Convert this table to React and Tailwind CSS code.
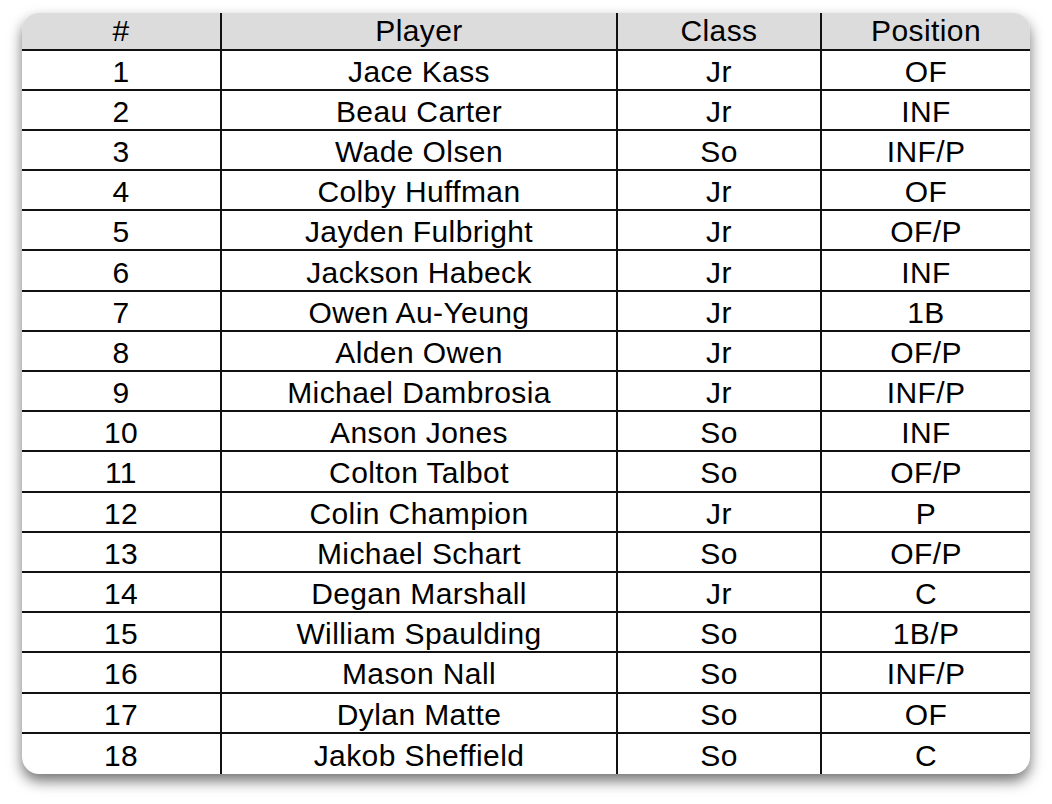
const players = [
  [1, "Jace Kass", "Jr", "OF"],
  [2, "Beau Carter", "Jr", "INF"],
  [3, "Wade Olsen", "So", "INF/P"],
  [4, "Colby Huffman", "Jr", "OF"],
  [5, "Jayden Fulbright", "Jr", "OF/P"],
  [6, "Jackson Habeck", "Jr", "INF"],
  [7, "Owen Au-Yeung", "Jr", "1B"],
  [8, "Alden Owen", "Jr", "OF/P"],
  [9, "Michael Dambrosia", "Jr", "INF/P"],
  [10, "Anson Jones", "So", "INF"],
  [11, "Colton Talbot", "So", "OF/P"],
  [12, "Colin Champion", "Jr", "P"],
  [13, "Michael Schart", "So", "OF/P"],
  [14, "Degan Marshall", "Jr", "C"],
  [15, "William Spaulding", "So", "1B/P"],
  [16, "Mason Nall", "So", "INF/P"],
  [17, "Dylan Matte", "So", "OF"],
  [18, "Jakob Sheffield", "So", "C"],
];

const cols = "grid grid-cols-[200px_396px_204px_208px]";

const Cell = ({ children, last, className = "" }) => (
  <div
    className={`flex items-center justify-center border-[#111] leading-none ${
      last ? "" : "border-r-2"
    } ${className}`}
  >
    {children}
  </div>
);

export default function App() {
  return (
    <div className="min-h-[804px] w-[1052px] bg-white pt-[12.5px] pl-[22px]">
      <div
        className="w-[1008px] overflow-hidden rounded-[17px] bg-white text-[30px] tracking-[0.4px] text-black shadow-[0_7px_14px_rgba(0,0,0,0.55)]"
        style={{ fontFamily: '"Liberation Sans", Arial, sans-serif' }}
      >
        <div className={`${cols} h-[38px] border-b-2 border-[#111] bg-[#dcdcdc]`}>
          <Cell>#</Cell>
          <Cell>Player</Cell>
          <Cell>Class</Cell>
          <Cell last>Position</Cell>
        </div>
        {players.map(([num, name, cls, pos], i) => (
          <div
            key={num}
            className={`${cols} h-[40.2px] border-[#111] ${
              i === players.length - 1 ? "" : "border-b-2"
            }`}
          >
            <Cell className="pt-[4px]">{num}</Cell>
            <Cell className="pt-[4px]">{name}</Cell>
            <Cell className="pt-[4px]">{cls}</Cell>
            <Cell className="pt-[4px]" last>
              {pos}
            </Cell>
          </div>
        ))}
      </div>
    </div>
  );
}
